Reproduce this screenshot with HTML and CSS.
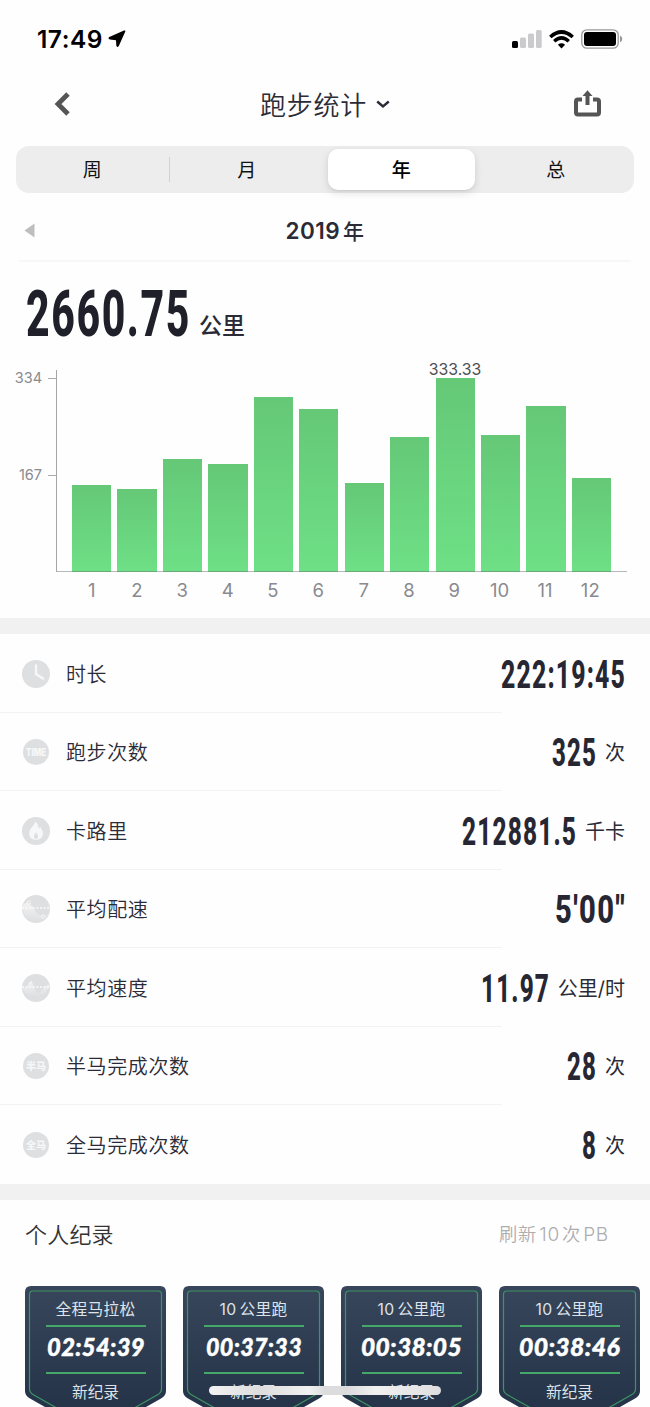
FILE: index.html
```html
<!DOCTYPE html>
<html lang="zh-CN">
<head>
    <meta charset="UTF-8">
    <meta name="viewport" content="width=device-width, initial-scale=1.0">
    <title>跑步统计</title>
    <link rel="stylesheet" href="styles.css">
</head>
<body>
    <div class="status-bar">
        <div class="status-left">
            <span class="clock">17:49</span>
            <svg width="18" height="18" viewBox="0 0 18 18"><path d="M17.3 1.5 10.8 16Q9 18 8.300 15.500L8 10.200 2 9.500Q-.5 8.500 1.300 7L16 .5Q17.800 0 17.300 1.500Z"/></svg>
        </div>
        <div class="status-right">
            <svg class="signal" width="30" height="18" viewBox="0 0 30 18">
                <rect x="0" y="11" width="6" height="7" rx="1.5"/>
                <rect class="off" x="8" y="7.5" width="6" height="10.5" rx="1.5"/>
                <rect class="off" x="16" y="3.5" width="6" height="14.5" rx="1.5"/>
                <rect class="off" x="24" y="0" width="5.7" height="18" rx="1.5"/>
            </svg>
            <svg class="wifi" width="25" height="19" viewBox="0 0 25 19">
                <path d="M1.3 7Q12.5-3 23.7 7" stroke-width="3.6"/>
                <path d="M5.2 11.2q7.3-6.6 14.6 0" stroke-width="3.4"/>
                <path class="dot" d="M8.9 14.8q3.6-2.9 7.2 0L12.5 18.6Z"/>
            </svg>
            <svg class="battery" width="42" height="20" viewBox="0 0 42 20">
                <rect class="shell" x=".8" y=".8" width="36.4" height="18.4" rx="5"/>
                <rect x="3" y="3" width="32" height="14" rx="3"/>
                <path class="tip" d="M39 6.5q2.3 1 2.3 3.5T39 13.5Z"/>
            </svg>
        </div>
    </div>

    <div class="navbar">
        <svg class="back" width="16" height="24" viewBox="0 0 16 24"><path d="M14 2 4 12l10 10"/></svg>
        <div class="title">
            <span>跑步统计</span>
            <svg width="14" height="9" viewBox="0 0 14 9"><path d="m1.2 1.5 5.8 5 5.8-5"/></svg>
        </div>
        <svg class="share" width="27" height="28" viewBox="0 0 27 28">
            <path d="M8 9.5H4Q2 9.5 2 11.5V22.5Q2 24.5 4 24.5H23Q25 24.5 25 22.5V11.5Q25 9.5 23 9.5H19"/>
            <path class="stem" d="M13.5 15V6"/>
            <path class="arrow" d="M8.5 6 13.5.3l5 5.7Z"/>
        </svg>
    </div>

    <div class="tabs">
        <div class="tab">周</div>
        <div class="tab divided">月</div>
        <div class="tab active">年</div>
        <div class="tab">总</div>
    </div>

    <div class="period">
        <svg width="11" height="15" viewBox="0 0 11 15"><path d="M10.5.5v14L.5 7.5Z"/></svg>
        <span>2019<b>年</b></span>
    </div>

    <div class="total">
        <svg width="164" height="50"><text x="0" y="47.5" textLength="165" lengthAdjust="spacingAndGlyphs">2660.75</text></svg>
        <span>公里</span>
    </div>

    <div class="chart">
        <div class="y-axis">
            <span>334</span>
            <span>167</span>
        </div>
        <div class="plot">
            <div class="bar" style="height: 87px"></div>
            <div class="bar" style="height: 83px"></div>
            <div class="bar" style="height: 113.5px"></div>
            <div class="bar" style="height: 108px"></div>
            <div class="bar" style="height: 175px"></div>
            <div class="bar" style="height: 163px"></div>
            <div class="bar" style="height: 89px"></div>
            <div class="bar" style="height: 135.5px"></div>
            <div class="bar" style="height: 194px"><span class="peak">333.33</span></div>
            <div class="bar" style="height: 137px"></div>
            <div class="bar" style="height: 166px"></div>
            <div class="bar" style="height: 94px"></div>
        </div>
        <div class="months">
            <span>1</span><span>2</span><span>3</span><span>4</span><span>5</span><span>6</span>
            <span>7</span><span>8</span><span>9</span><span>10</span><span>11</span><span>12</span>
        </div>
    </div>

    <div class="stats">
        <div class="stat">
            <svg class="icon" viewBox="0 0 28 28"><circle cx="14" cy="14" r="14"/><path class="hand" d="M14 5.5V14l7 4.5"/></svg>
            <span class="label">时长</span>
            <svg class="num" width="124" height="30"><text y="28.5" textLength="125" lengthAdjust="spacingAndGlyphs">222:19:45</text></svg>
        </div>
        <div class="stat">
            <svg class="icon" viewBox="0 0 28 28"><circle cx="14" cy="14" r="13"/><text class="mark time" x="14" y="17.6" textLength="20" lengthAdjust="spacingAndGlyphs">TIME</text></svg>
            <span class="label">跑步次数</span>
            <svg class="num" width="44" height="30"><text y="28.5" textLength="45" lengthAdjust="spacingAndGlyphs">325</text></svg>
            <span class="unit">次</span>
        </div>
        <div class="stat">
            <svg class="icon" viewBox="0 0 28 28"><circle cx="14" cy="14" r="14"/><path class="flame" d="M13 4.5c.2 4-5.8 6.5-5.8 12 0 4 3 6.3 6.8 6.3s6.9-2.3 6.9-6.3c0-3.2-1.900-4.500-2.500-6.800l-1.700 2C16.500 8.500 15.500 6 13 4.500Z"/><path d="M14 15.5c-1 1.200-2 2.200-2 3.900 0 1.500.8 2.600 2 2.600s2-1.100 2-2.600c0-1.700-1-2.700-2-3.900Z"/></svg>
            <span class="label">卡路里</span>
            <svg class="num" width="114" height="30"><text y="28.5" textLength="115" lengthAdjust="spacingAndGlyphs">212881.5</text></svg>
            <span class="unit">千卡</span>
        </div>
        <div class="stat">
            <svg class="icon" viewBox="0 0 28 28">
                <defs><linearGradient id="fade" x2="0" y2="1"><stop offset="0" stop-color="#f3f3f3"/><stop offset="1" stop-color="#dedfe1"/></linearGradient></defs>
                <circle cx="14" cy="14" r="14"/>
                <path class="area" d="M.8 10 4.5 7.500 7 9l3 1.500c3 4 4 8.500 7 9.500h9.500A14 14 0 0 1 .8 10Z"/>
                <path class="dash" d="M0 13h28"/>
                <circle class="ring" cx="7" cy="7.5" r="1.6"/><circle class="ring" cx="21" cy="21.5" r="1.6"/>
            </svg>
            <span class="label">平均配速</span>
            <svg class="num" width="70" height="30"><text y="28.5" textLength="71" lengthAdjust="spacingAndGlyphs">5'00"</text></svg>
        </div>
        <div class="stat">
            <svg class="icon" viewBox="0 0 28 28">
                <circle cx="14" cy="14" r="14"/>
                <path class="area" d="M.2 13.5H3c3-1 4-6.500 6-6.500s3.500 12 7 12c4 0 5-8 11.200-8A14 14 0 0 1 .2 13.500Z"/>
                <path class="dash" d="M0 13h28"/>
            </svg>
            <span class="label">平均速度</span>
            <svg class="num" width="68" height="30"><text y="28.5" textLength="69" lengthAdjust="spacingAndGlyphs">11.97</text></svg>
            <span class="unit">公里/时</span>
        </div>
        <div class="stat">
            <svg class="icon" viewBox="0 0 28 28"><circle cx="14" cy="14" r="13"/><text class="mark" x="14" y="17.5">半马</text></svg>
            <span class="label">半马完成次数</span>
            <svg class="num" width="29" height="30"><text y="28.5" textLength="30" lengthAdjust="spacingAndGlyphs">28</text></svg>
            <span class="unit">次</span>
        </div>
        <div class="stat">
            <svg class="icon" viewBox="0 0 28 28"><circle cx="14" cy="14" r="13"/><text class="mark" x="14" y="17.5">全马</text></svg>
            <span class="label">全马完成次数</span>
            <svg class="num" width="14" height="30"><text y="28.5" textLength="15" lengthAdjust="spacingAndGlyphs">8</text></svg>
            <span class="unit">次</span>
        </div>
    </div>

    <div class="records">
        <div class="records-head">
            <h2>个人纪录</h2>
            <span>刷新<i>10</i>次<i>PB</i></span>
        </div>
        <div class="badges">
            <div class="badge">
                <svg class="shield" viewBox="0 0 141 150"><use href="#shield"/></svg>
                <p class="race">全程马拉松</p>
                <svg class="result" width="100" height="30"><text x="1" y="23" textLength="98" lengthAdjust="spacingAndGlyphs">02:54:39</text></svg>
                <p class="new">新纪录</p>
            </div>
            <div class="badge">
                <svg class="shield" viewBox="0 0 141 150"><use href="#shield"/></svg>
                <p class="race"><i>10</i>公里跑</p>
                <svg class="result" width="100" height="30"><text x="2" y="23" textLength="96" lengthAdjust="spacingAndGlyphs">00:37:33</text></svg>
                <p class="new">新纪录</p>
            </div>
            <div class="badge">
                <svg class="shield" viewBox="0 0 141 150"><use href="#shield"/></svg>
                <p class="race"><i>10</i>公里跑</p>
                <svg class="result" width="102" height="30"><text x="0" y="23" textLength="101" lengthAdjust="spacingAndGlyphs">00:38:05</text></svg>
                <p class="new">新纪录</p>
            </div>
            <div class="badge">
                <svg class="shield" viewBox="0 0 141 150"><use href="#shield"/></svg>
                <p class="race"><i>10</i>公里跑</p>
                <svg class="result" width="102" height="30"><text x="0" y="23" textLength="101" lengthAdjust="spacingAndGlyphs">00:38:46</text></svg>
                <p class="new">新纪录</p>
            </div>
        </div>
    </div>

    <div class="home-indicator"></div>

    <!-- shared badge shape -->
    <svg class="sprite" width="0" height="0">
        <defs>
            <linearGradient id="navy" x2="0" y2="1">
                <stop offset="0" stop-color="#37465b"/>
                <stop offset=".8" stop-color="#253449"/>
            </linearGradient>
            <g id="shield">
                <path fill="url(#navy)" d="M6 0H135q6 0 6 6V105q0 5-5 7.5L75 147q-4.5 2-9 0L5 112.5Q0 110 0 105V6Q0 0 6 0Z"/>
                <path fill="none" stroke="#3d9464" stroke-width="1.2" d="M8 5H133q3.5 0 3.5 3.5V102.5q0 4-3.5 6L70.5 144 8 108.5q-3.5-2-3.5-6V8.5Q4.5 5 8 5Z"/>
            </g>
        </defs>
    </svg>
</body>
</html>
```
FILE: styles.css
```css
* {
    margin: 0;
    padding: 0;
    box-sizing: border-box;
}

body {
    position: relative;
    width: 650px;
    height: 1407px;
    overflow: hidden;
    background: #fefefe;
    color: #2b2b37;
    font-family: Inter, 'Noto Sans CJK SC', sans-serif;
}

svg {
    display: block;
    flex-shrink: 0;
}

i {
    font-style: normal;
}

/* status bar */
.status-bar {
    height: 78px;
    padding: 0 27px 0 37px;
    display: flex;
    align-items: center;
    justify-content: space-between;
}

.status-left,
.status-right {
    display: flex;
    align-items: center;
}

.status-left {
    gap: 5px;
}

.clock {
    color: #000;
    font-size: 24.5px;
    font-weight: 600;
    letter-spacing: 0.5px;
}

.signal .off {
    fill: #cbcbcd;
}

.wifi {
    margin: 0 7px 0 7px;
    fill: none;
    stroke: #000;
}

.wifi .dot {
    fill: #000;
    stroke: none;
}

.battery .shell {
    fill: none;
    stroke: #999;
    stroke-width: 1.3;
}

.battery .tip {
    fill: #999;
}

/* navigation */
.navbar {
    height: 52px;
    padding: 0 49px 0 54px;
    display: flex;
    align-items: center;
    justify-content: space-between;
}

.back {
    fill: none;
    stroke: #555;
    stroke-width: 4.8;
}

.title {
    padding-left: 6px;
    display: flex;
    align-items: center;
    gap: 9px;
    font-size: 26px;
    font-weight: 350;
    line-height: 36px;
    letter-spacing: 0.8px;
}

.title span {
    padding-top: 3px;
}

.title svg {
    fill: none;
    stroke: #2b2b37;
    stroke-width: 2.4;
}

.share {
    fill: none;
    stroke: #555;
    stroke-width: 4;
}

.share .arrow {
    fill: #555;
    stroke: none;
}

/* range tabs */
.tabs {
    height: 47px;
    margin: 16px 16px 0;
    display: flex;
    border-radius: 13px;
    background: #ededed;
    color: #111;
    font-size: 19px;
}

.tab {
    flex: 0 0 154.5px;
    padding: 0 2px 2px 0;
    display: flex;
    align-items: center;
    justify-content: center;
}

.tab.divided {
    margin-left: -2px;
    margin-right: 2px;
    padding-left: 4px;
    background: linear-gradient(#d2d2d4, #d2d2d4) 0 50% / 1px 25px no-repeat;
}

.tab.active {
    flex-basis: 146.5px;
    margin: 3px 5px 3px 3px;
    padding: 0 0 2px;
    border-radius: 10px;
    background: #fff;
    box-shadow: 0 3px 8px rgba(0, 0, 0, 0.12), 0 1px 2px rgba(0, 0, 0, 0.06);
    color: #000;
    font-weight: 500;
}

.period {
    height: 69px;
    margin: 0 19px;
    padding: 7px 5px 0 5px;
    display: flex;
    align-items: center;
    border-bottom: 2px solid #f7f7f9;
}

.period svg {
    fill: #bebec0;
}

.period span {
    flex: 1;
    padding: 2px 11px 0 0;
    text-align: center;
    font-size: 22.5px;
    font-weight: 600;
    line-height: 30px;
    letter-spacing: 0.4px;
}

.period b {
    margin-left: 3px;
    font-size: 21px;
    font-weight: 500;
}

.total {
    height: 87px;
    padding: 26px 26px 0;
    display: flex;
    align-items: flex-start;
    gap: 9px;
}

.total svg {
    overflow: visible;
}

.total text {
    fill: #20202a;
    font-family: Roboto, sans-serif;
    font-size: 64px;
    font-weight: 800;
    letter-spacing: 2.5px;
}

.total span {
    padding-top: 21px;
    font-size: 23px;
    font-weight: 500;
    line-height: 34px;
}

/* bar chart */
.chart {
    height: 269px;
    display: grid;
    grid-template-columns: 56px 571px;
    grid-template-rows: 223px 46px;
}

.y-axis {
    padding-top: 20px;
    color: #8a8a8f;
    font-size: 14.5px;
    line-height: 18px;
}

.y-axis span {
    display: flex;
    align-items: center;
    justify-content: flex-end;
    gap: 6px;
    height: 18px;
    margin-bottom: 79px;
}

.y-axis span::after {
    content: '';
    width: 8px;
    height: 1px;
    background: #aaa;
}

.plot {
    position: relative;
    height: 202px;
    margin-top: 21px;
    padding: 0 16px 0 15px;
    display: flex;
    align-items: flex-end;
    justify-content: space-between;
    border-left: 1px solid #a5a5aa;
}

/* baseline drawn over the bars */
.plot::after {
    content: '';
    position: absolute;
    right: 0;
    bottom: 0;
    left: 0;
    height: 1.5px;
    background: rgba(100, 100, 106, 0.45);
}

.bar {
    width: 39.2px;
    background: linear-gradient(#65c877, #6ee086);
}

.peak {
    display: block;
    margin: -18px -10px 0;
    text-align: center;
    color: #505055;
    font-size: 15.8px;
    line-height: 20px;
}

.months {
    grid-column: 2;
    padding: 6px 14px 0 13px;
    display: flex;
    color: #8a8a8f;
    font-size: 18.5px;
    line-height: 25px;
}

.months span {
    flex: 1;
    text-align: center;
}

/* stat rows */
.stats {
    height: 582px;
    border-top: 16px solid #f1f1f1;
    border-bottom: 16px solid #f1f1f1;
}

.stat {
    height: 78.5px;
    padding: 1px 25px 0 22px;
    display: flex;
    align-items: center;
    background: linear-gradient(#f3f3f7, #f3f3f7) 0 100% / 502px 1px no-repeat;
}

.stat:last-child {
    background: none;
}

.icon {
    width: 28px;
    height: 28px;
    fill: #dedfe1;
}

.icon .hand {
    fill: none;
    stroke: #f7f7f7;
    stroke-width: 2.4;
    stroke-linecap: round;
}

.icon .flame {
    fill: #f7f7f7;
}

.icon .area {
    fill: url(#fade);
}

.icon .dash {
    fill: none;
    stroke: #fafafa;
    stroke-width: 1.4;
    stroke-dasharray: 2 1.6;
}

.icon .ring {
    fill: none;
    stroke: #f7f7f7;
}

.icon .mark {
    fill: #f7f7f7;
    font-size: 10px;
    font-weight: 900;
    text-anchor: middle;
}

.label {
    margin: 0 auto 0 16px;
    padding-top: 2px;
    font-size: 20px;
    font-weight: 350;
    line-height: 28px;
    letter-spacing: 0.6px;
}

.num {
    overflow: visible;
}

.num text {
    fill: #272733;
    font-family: Roboto, sans-serif;
    font-size: 38.5px;
    font-weight: 800;
    letter-spacing: 1.8px;
}

.unit {
    margin-left: 9px;
    padding-top: 2px;
    font-size: 20px;
    line-height: 28px;
}

/* personal records */
.records-head {
    height: 86px;
    padding: 0 39px 20px 25px;
    display: flex;
    align-items: center;
    justify-content: space-between;
    color: #adadb0;
    font-size: 18.3px;
    font-weight: 350;
    letter-spacing: 0.8px;
}

.records-head h2 {
    color: #333;
    font-size: 22px;
    font-weight: 350;
    letter-spacing: 0.2px;
}

.records-head i {
    margin: 0 2px;
    font-size: 19px;
}

.badges {
    padding-left: 25px;
    display: flex;
    gap: 17px;
}

.badge {
    position: relative;
    width: 141px;
    height: 150px;
    flex-shrink: 0;
    display: flex;
    flex-direction: column;
    align-items: center;
    color: #dfe3e8;
    font-size: 15.7px;
}

.shield {
    position: absolute;
    top: 0;
    left: 0;
    z-index: -1;
    width: 141px;
    height: 150px;
}

.race {
    width: 100px;
    height: 41px;
    padding-top: 12px;
    border-bottom: 2px solid #44a869;
    text-align: center;
    line-height: 24px;
    letter-spacing: 0.3px;
}

.race i {
    margin-right: 3px;
}

.result {
    height: 45px;
    padding-top: 6px;
    overflow: visible;
}

.result text {
    fill: #fff;
    stroke: #fff;
    stroke-width: 0.5;
    font-family: Lato, sans-serif;
    font-size: 25px;
    font-style: italic;
    font-weight: 900;
    letter-spacing: 0.4px;
}

.new {
    width: 100px;
    padding-top: 7px;
    border-top: 2px solid #44a869;
    text-align: center;
    line-height: 24px;
}

.home-indicator {
    position: absolute;
    top: 1386px;
    left: 209px;
    width: 232px;
    height: 8.5px;
    border-radius: 5px;
    background: linear-gradient(90deg, #f3f3f3, #dcdcde 22%, #f1f1f1 43%, #dcdcde 50%, #dcdcde 60%, #f1f1f1 72%, #dedee0);
}
```
